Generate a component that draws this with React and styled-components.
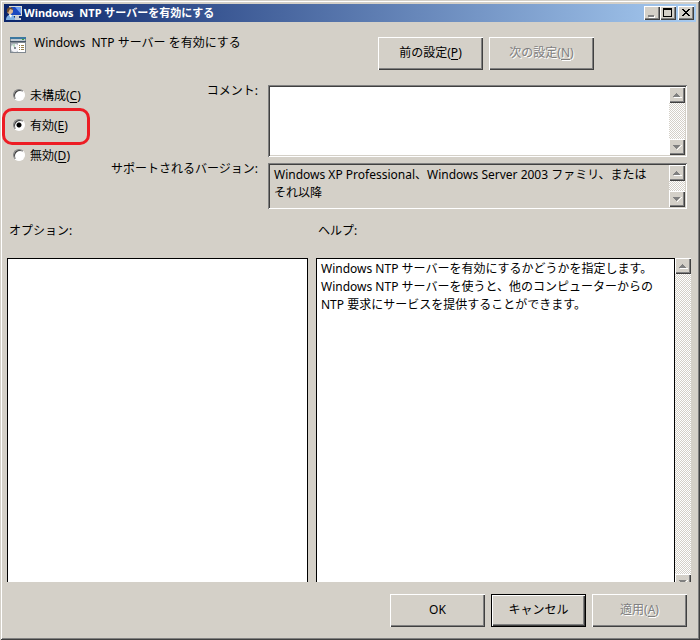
import React from "react";
import styled, { createGlobalStyle, css } from "styled-components";

const App = () => {
  return (
    <>
      <GlobalStyle />
      <Window>
        <TitleBar>
          <TitleIcon />
          <h1>Windows&nbsp; NTP サーバーを有効にする</h1>
          <WindowButton aria-label="最小化" disabled>
            <svg width="12" height="10" shapeRendering="crispEdges">
              <path d="M3 9h6v1H3zM8 8h1v1H8z" fill="#fff" />
              <path d="M2 7h6v2H2z" fill="#808080" />
            </svg>
          </WindowButton>
          <WindowButton aria-label="最大化">
            <svg width="12" height="10" shapeRendering="crispEdges">
              <path d="M1 0h9v9H1zM2 2v6h7V2z" fillRule="evenodd" />
            </svg>
          </WindowButton>
          <WindowButton aria-label="閉じる" $apart>
            <svg width="12" height="10" shapeRendering="crispEdges">
              <path d="M2 1h2v1h1v1h2V2h1V1h2v1H9v1H8v1H7v1h1v1h1v1h1v1H8V7H7V6H5v1H4v1H2V7h1V6h1V5h1V4H4V3H3V2H2z" />
            </svg>
          </WindowButton>
        </TitleBar>

        <Header>
          <SettingName>
            <SettingIcon />
            <h2>Windows&nbsp; NTP サーバー を有効にする</h2>
          </SettingName>
          <Button $width={105}>
            前の設定(<u>P</u>)
          </Button>
          <Button $width={105} disabled>
            次の設定(<u>N</u>)
          </Button>
        </Header>

        <Settings>
          <RadioList>
            <RadioRow>
              <input type="radio" name="state" />
              <span>
                未構成(<u>C</u>)
              </span>
            </RadioRow>
            <RadioRow $marked>
              <input type="radio" name="state" defaultChecked />
              <span>
                有効(<u>E</u>)
              </span>
            </RadioRow>
            <RadioRow>
              <input type="radio" name="state" />
              <span>
                無効(<u>D</u>)
              </span>
            </RadioRow>
          </RadioList>
          <Fields>
            <label htmlFor="comment">コメント:</label>
            <Field $height={72}>
              <textarea id="comment" />
              <ScrollBar />
            </Field>
            <label htmlFor="version">サポートされるバージョン:</label>
            <Field $height={46} $readOnly>
              <textarea id="version" readOnly defaultValue={VERSION} />
              <ScrollBar />
            </Field>
          </Fields>
        </Settings>

        <Panels>
          <PanelTitle>オプション:</PanelTitle>
          <PanelTitle>ヘルプ:</PanelTitle>
          <Panel />
          <HelpArea>
            <Panel>
              {HELP.map((line) => (
                <p key={line}>{line}</p>
              ))}
            </Panel>
            <ScrollBar cut />
          </HelpArea>
        </Panels>

        <Footer>
          <Button $width={95}>OK</Button>
          <Button $width={95} $focused>
            キャンセル
          </Button>
          <Button $width={95} disabled>
            適用(<u>A</u>)
          </Button>
        </Footer>
      </Window>
    </>
  );
};

export default App;

const VERSION =
  "Windows XP Professional、Windows Server 2003 ファミリ、または\nそれ以降";

const HELP = [
  "Windows NTP サーバーを有効にするかどうかを指定します。",
  "Windows NTP サーバーを使うと、他のコンピューターからの",
  "NTP 要求にサービスを提供することができます。",
];

const ScrollBar = ({ cut }) => (
  <ScrollTrack $cut={cut}>
    <ScrollButton aria-label="上へ">
      <svg width="9" height="6" shapeRendering="crispEdges">
        <path d="M1 5h8v1H1z" fill="#fff" />
        <path d="M3 1h1v1h1v1h1v1h1v1H0V4h1V3h1V2h1z" fill="#808080" />
      </svg>
    </ScrollButton>
    <ScrollButton aria-label="下へ">
      <svg width="9" height="6" shapeRendering="crispEdges">
        <path d="M8 1h1v1H8v1H7v1H6v1H5v1H4V5z" fill="#fff" />
        <path d="M0 1h7v1H6v1H5v1H4v1H3V4H2V3H1V2H0z" fill="#808080" />
      </svg>
    </ScrollButton>
  </ScrollTrack>
);

const TitleIcon = () => (
  <svg width="16" height="16" viewBox="0 0 16 16" aria-hidden="true">
    <rect x="3" y="1" width="13" height="10" fill="#dcdcd4" />
    <rect x="5" y="2" width="10" height="8" fill="#1c48c0" />
    <path d="M9 2h6v7z" fill="#6c9cf0" />
    <path d="M9 11h4v2h2v2H8v-2h1z" fill="#c8ccd4" />
    <circle cx="4" cy="6" r="3" fill="#e0b890" />
    <path d="M1 7c-1-6 6-6 6-2L4 4 2 8z" fill="#6b4a2c" />
    <path d="M0 15c0-7 9-7 9 0z" fill="#7fb0e4" />
    <path d="M3 10h3l-1 3z" fill="#fff" />
  </svg>
);

const SettingIcon = () => (
  <svg width="16" height="16" viewBox="0 0 16 16" aria-hidden="true">
    <rect x="0" y="0" width="16" height="16" fill="#808890" />
    <rect x="0" y="0" width="16" height="2" fill="#3c78a0" />
    <rect x="1" y="2" width="14" height="2" fill="#c0c8d0" />
    <rect x="12" y="2" width="2" height="1" fill="#40a840" />
    <rect x="0" y="4" width="16" height="1" fill="#485868" />
    <rect x="1" y="6" width="14" height="9" fill="#a8b0b8" />
    <circle cx="5" cy="11" r="4" fill="#f4f4f8" />
    <path d="M5 11L2 8a4 4 0 0 1 3-1z" fill="#b8d8c0" />
    <circle cx="5" cy="11" r="1" fill="#606870" />
    <rect x="8" y="6" width="7" height="9" fill="#fff" />
    <path
      d="M9 8h1v1H9zM11 8h3v1h-3zM9 10h1v1H9zM11 10h3v1h-3zM9 12h1v1H9zM11 12h3v1h-3z"
      fill="#98804c"
    />
  </svg>
);

const GlobalStyle = createGlobalStyle`
  *, *::after {
    box-sizing: border-box;
  }

  body {
    margin: 0;
    background: #d4d0c8;
  }

  body, button, textarea {
    color: #000;
    font-family: "Noto Sans", "Noto Sans CJK JP", sans-serif;
    font-size: 12px;
    line-height: 18px;
  }

  h1, h2, p {
    margin: 0;
    font-size: 12px;
  }
`;

const raised = css`
  border: 0;
  background: #d4d0c8;
  box-shadow: inset 1px 1px #fff, inset -1px -1px #404040,
    inset -2px -2px #808080;
`;

const Window = styled.main`
  display: flex;
  flex-direction: column;
  min-height: 100vh;
  padding: 4px 4px 0;
  background: #d4d0c8;
  box-shadow: inset 1px 1px #d4d0c8, inset -1px -1px #404040,
    inset 2px 2px #fff, inset -2px -2px #808080;
`;

const TitleBar = styled.header`
  display: flex;
  align-items: center;
  height: 18px;
  padding: 0 2px;
  background: linear-gradient(to right, #0a246a, #a6caf0);

  h1 {
    flex: 1;
    padding-left: 2px;
    color: #fff;
    font-size: 11px;
    font-weight: 700;
    white-space: nowrap;
  }
`;

const WindowButton = styled.button`
  ${raised}
  display: flex;
  width: 16px;
  height: 14px;
  margin-left: ${({ $apart }) => ($apart ? "2px" : "0")};
  padding: 2px;
`;

const Header = styled.div`
  display: flex;
  gap: 6px;
  padding: 15px 6px 0;
`;

const SettingName = styled.div`
  display: flex;
  gap: 8px;
  width: 362px;

  h2 {
    margin-top: -3px;
    font-weight: 400;
    white-space: nowrap;
  }
`;

const Button = styled.button`
  ${raised}
  width: ${({ $width }) => $width}px;
  height: 33px;
  padding: 0 0 2px;
  ${({ $focused }) =>
    $focused &&
    css`
      border: 1px solid #000;
    `}

  &:disabled {
    color: #808080;
    text-shadow: 1px 1px #fff;
  }

  u {
    text-underline-offset: 2px;
  }
`;

const Settings = styled.div`
  display: flex;
  padding: 10px 9px 0;
`;

const RadioList = styled.div`
  width: 90px;
`;

const RadioRow = styled.label`
  position: relative;
  display: flex;
  align-items: center;
  gap: 5px;
  height: 30px;

  span {
    padding-top: 2px;
  }

  u {
    text-underline-offset: 2px;
  }

  input {
    appearance: none;
    width: 12px;
    height: 12px;
    margin: 0;
    border: 1px solid;
    border-color: #808080 #fff #fff #808080;
    border-radius: 50%;
    background: #fff;
    box-shadow: inset 1px 1px #404040;
  }

  input:checked {
    background: radial-gradient(circle, #000 2px, #fff 3px);
  }

  ${({ $marked }) =>
    $marked &&
    css`
      &::after {
        content: "";
        position: absolute;
        top: -2px;
        left: -11px;
        width: 88px;
        height: 37px;
        border: 3px solid #ed1c24;
        border-radius: 10px;
      }
    `}
`;

const Fields = styled.div`
  flex: 1;
  display: grid;
  grid-template-columns: 155px 1fr;
  gap: 6px 10px;
  padding-top: 5px;

  label {
    line-height: 12px;
    text-align: right;
    white-space: nowrap;
  }
`;

const Field = styled.div`
  display: flex;
  height: ${({ $height }) => $height}px;
  padding: 2px;
  background: ${({ $readOnly }) => ($readOnly ? "#d4d0c8" : "#fff")};
  box-shadow: inset 1px 1px #808080, inset -1px -1px #fff,
    inset 2px 2px #404040, inset -2px -2px #d4d0c8;

  textarea {
    flex: 1;
    min-width: 0;
    padding: 1px 4px;
    border: 0;
    outline: 0;
    background: transparent;
    overflow: hidden;
    resize: none;
  }
`;

const ScrollTrack = styled.div`
  display: flex;
  flex-direction: column;
  justify-content: space-between;
  width: 16px;
  margin-bottom: ${({ $cut }) => ($cut ? "-8px" : "0")};
  background: repeating-conic-gradient(#fff 0 25%, #d4d0c8 0 50%) 0 0 / 2px 2px;
`;

const ScrollButton = styled.button`
  ${raised}
  display: flex;
  align-items: center;
  justify-content: center;
  width: 16px;
  height: 16px;
  padding: 0;
`;

const Panels = styled.section`
  flex: 1;
  display: grid;
  grid-template-columns: 301fr 375fr;
  grid-template-rows: 20px 1fr;
  gap: 17px 8px;
  padding: 12px 5px 0 3px;
`;

const PanelTitle = styled.div`
  padding-left: 2px;
  line-height: 20px;
`;

const Panel = styled.div`
  flex: 1;
  padding: 1px 4px;
  border: 1px solid #000;
  border-bottom: 0;
  background: #fff;

  p {
    white-space: nowrap;
  }
`;

const HelpArea = styled.div`
  display: flex;
  min-width: 0;
  overflow: hidden;
`;

const Footer = styled.footer`
  display: flex;
  justify-content: flex-end;
  gap: 6px;
  padding: 12px 9px 13px;
`;
